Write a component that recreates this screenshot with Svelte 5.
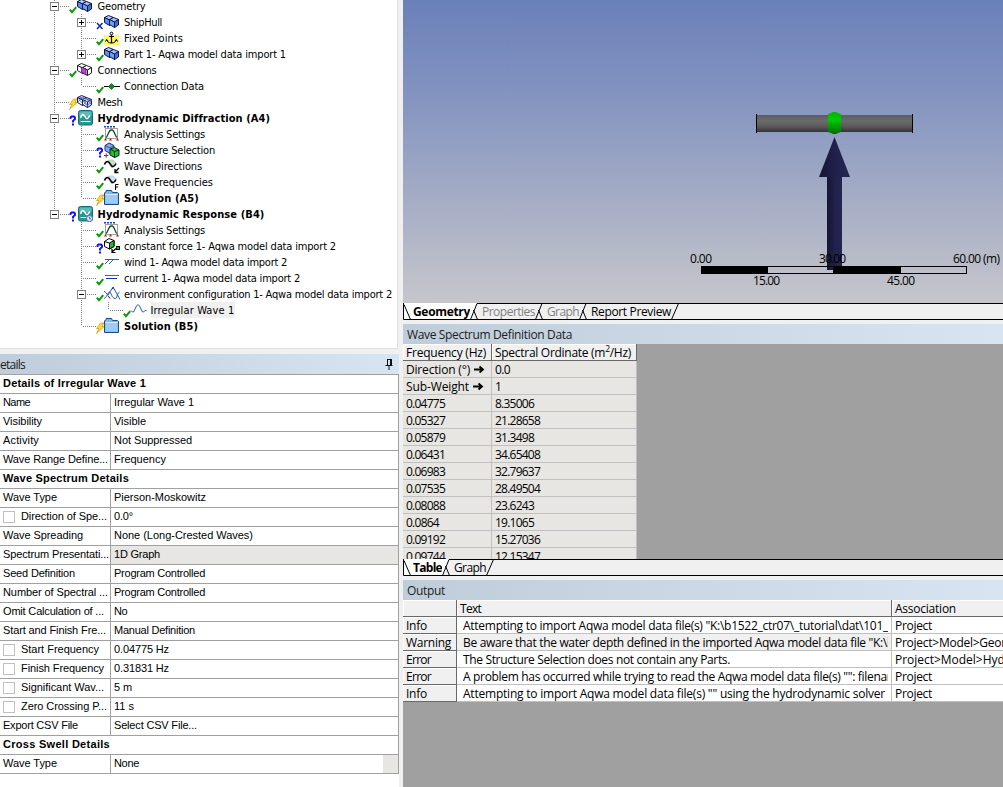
<script>
  // Adjusts tracking so that a label takes the given width in pixels.
  function fit(node, width) {
    if (!width) return;
    const natural = node.getBoundingClientRect().width;
    const n = node.textContent.length;
    node.style.letterSpacing = (width - natural) / n + 'px';
  }

  // d: depth, box: expander, v: guide columns (1 = through, 0.5 = ends here)
  const tree = [
    { d: 0, box: '-', st: 'ok', ic: 'cubes', t: 'Geometry', w: 48, v: [1] },
    { d: 1, box: '+', st: 'x', ic: 'cubes', t: 'ShipHull', w: 38, v: [1, 1] },
    { d: 1, st: 'ok', ic: 'anchor', t: 'Fixed Points', w: 59, v: [1, 1] },
    { d: 1, box: '+', st: 'ok', ic: 'cubes', t: 'Part 1- Aqwa model data import 1', w: 162, v: [1, 0.5] },
    { d: 0, box: '-', st: 'ok', ic: 'conn', t: 'Connections', w: 59, v: [1] },
    { d: 1, st: 'ok', ic: 'conndata', t: 'Connection Data', w: 80, v: [1, 0.5] },
    { d: 0, st: 'bolt', ic: 'mesh', t: 'Mesh', w: 25, v: [1] },
    { d: 0, box: '-', st: 'q', ic: 'hydro', t: 'Hydrodynamic Diffraction (A4)', b: 1, w: 172, v: [1] },
    { d: 1, st: 'ok', ic: 'analysis', t: 'Analysis Settings', w: 81, v: [1, 1] },
    { d: 1, st: 'q', ic: 'struct', t: 'Structure Selection', w: 91, v: [1, 1] },
    { d: 1, st: 'ok', ic: 'wavedir', t: 'Wave Directions', w: 78, v: [1, 1] },
    { d: 1, st: 'ok', ic: 'wavefreq', t: 'Wave Frequencies', w: 89, v: [1, 1] },
    { d: 1, st: 'bolt', ic: 'folder', t: 'Solution (A5)', b: 1, w: 75, v: [1, 0.5] },
    { d: 0, box: '-', st: 'q', ic: 'hydrot', t: 'Hydrodynamic Response (B4)', b: 1, w: 167, v: [0.5] },
    { d: 1, st: 'ok', ic: 'analysis', t: 'Analysis Settings', w: 81, v: [0, 1] },
    { d: 1, st: 'q', ic: 'force', t: 'constant force 1- Aqwa model data import 2', w: 212, v: [0, 1] },
    { d: 1, st: 'ok', ic: 'wind', t: 'wind 1- Aqwa model data import 2', w: 163, v: [0, 1] },
    { d: 1, st: 'ok', ic: 'current', t: 'current 1- Aqwa model data import 2', w: 176, v: [0, 1] },
    { d: 1, box: '-', st: 'ok', ic: 'env', t: 'environment configuration 1- Aqwa model data import 2', w: 268, v: [0, 1] },
    { d: 2, st: 'ok', ic: 'irr', t: 'Irregular Wave 1', w: 84, sel: 1, v: [0, 1, 0.5] },
    { d: 1, st: 'bolt', ic: 'folder', t: 'Solution (B5)', b: 1, w: 74, v: [0, 0.5] }
  ];

  const details = [
    { h: 'Details of Irregular Wave 1', w: 143 },
    { k: 'Name', w: 27, v: 'Irregular Wave 1', vw: 80 },
    { k: 'Visibility', w: 39, v: 'Visible', vw: 32 },
    { k: 'Activity', w: 36, v: 'Not Suppressed', vw: 78 },
    { k: 'Wave Range Define...', w: 105, v: 'Frequency', vw: 52 },
    { h: 'Wave Spectrum Details', w: 126 },
    { k: 'Wave Type', w: 54, v: 'Pierson-Moskowitz', vw: 92 },
    { k: 'Direction of Spe...', w: 86, c: 1, v: '0.0°', vw: 19 },
    { k: 'Wave Spreading', w: 80, v: 'None (Long-Crested Waves)', vw: 139 },
    { k: 'Spectrum Presentati...', w: 106, v: '1D Graph', vw: 46, g: 1 },
    { k: 'Seed Definition', w: 72, v: 'Program Controlled', vw: 91 },
    { k: 'Number of Spectral ...', w: 105, v: 'Program Controlled', vw: 91 },
    { k: 'Omit Calculation of ...', w: 101, v: 'No', vw: 13 },
    { k: 'Start and Finish Fre...', w: 103, v: 'Manual Definition', vw: 81 },
    { k: 'Start Frequency', w: 78, c: 1, v: '0.04775 Hz', vw: 55 },
    { k: 'Finish Frequency', w: 83, c: 1, v: '0.31831 Hz', vw: 55 },
    { k: 'Significant Wav...', w: 83, c: 1, v: '5 m', vw: 18 },
    { k: 'Zero Crossing P...', w: 86, c: 1, v: '11 s', vw: 20 },
    { k: 'Export CSV File', w: 75, v: 'Select CSV File...', vw: 83 },
    { h: 'Cross Swell Details', w: 107 },
    { k: 'Wave Type', w: 54, v: 'None', vw: 25, btn: 1 }
  ];

  const spectrum = [
    ['0.04775', '8.35006'],
    ['0.05327', '21.28658'],
    ['0.05879', '31.3498'],
    ['0.06431', '34.65408'],
    ['0.06983', '32.79637'],
    ['0.07535', '28.49504'],
    ['0.08088', '23.6243'],
    ['0.0864', '19.1065'],
    ['0.09192', '15.27036'],
    ['0.09744', '12.15347']
  ];
  const numWidth = (s) => (s.length - 1) * 6 + 3;

  const messages = [
    { k: 'Info', kw: 21, t: 'Attempting to import Aqwa model data file(s) "K:\\b1522_ctr07\\_tutorial\\dat\\101_', w: 425, a: 'Project', aw: 37 },
    { k: 'Warning', kw: 45, t: 'Be aware that the water depth defined in the imported Aqwa model data file "K:\\b', w: 431, a: 'Project>Model>Geometry', aw: 138, g: 1 },
    { k: 'Error', kw: 25, t: 'The Structure Selection does not contain any Parts.', w: 267, a: 'Project>Model>Hydrodynamic', aw: 169 },
    { k: 'Error', kw: 25, t: 'A problem has occurred while trying to read the Aqwa model data file(s) "": filename', w: 441, a: 'Project', aw: 37 },
    { k: 'Info', kw: 21, t: 'Attempting to import Aqwa model data file(s) "" using the hydrodynamic solver', w: 422, a: 'Project', aw: 37 }
  ];
</script>

{#snippet cube(x, y, top, left, right, line)}
  <g transform="translate({x} {y})" stroke={line} stroke-width="1" stroke-linejoin="round">
    <path d="M.5 2.5 4.5.5l5 2-4 2.5z" fill={top} />
    <path d="M.5 2.5 5.5 5v5.5L.5 7.5z" fill={left} />
    <path d="M5.5 5l4-2.5v5.5l-4 2.5z" fill={right} />
  </g>
{/snippet}

{#snippet status(kind)}
  {#if kind === 'ok'}
    <path d="M.8 11.6 3 14.2 7.2 9.2" fill="none" stroke="#0a9a0a" stroke-width="2" />
  {:else if kind === 'x'}
    <path d="M1 9l5.500 6M6.500 9 1 15" fill="none" stroke="#10309c" stroke-width="1.500" />
  {:else if kind === 'q'}
    <path d="M1.500 9V7.500l1-1h2.500l1 1v1.500L4 10.800V12.500" fill="none" stroke="#1010f0" stroke-width="1.900" />
    <rect x="3" y="13.500" width="2" height="2" fill="#1010f0" />
  {:else if kind === 'bolt'}
    <path d="M4.500 5h3.500L6 8.500h2.200L.5 15.500 3 10.500H.5z" fill="#ffd830" stroke="#c89c20" stroke-width=".7" />
  {/if}
{/snippet}

{#snippet glyph(kind)}
  {#if kind === 'cubes'}
    {@render cube(0, 1, '#a8c8ff', '#5a8ef0', '#4878e0', '#101840')}
    {@render cube(5, 3, '#9cc2ff', '#6c9cf8', '#4070dc', '#101840')}
  {:else if kind === 'anchor'}
    <rect x="0" y="5" width="15" height="10" fill="#fff860" />
    <g fill="none" stroke="#000">
      <circle cx="7.500" cy="3.500" r="1.300" />
      <path d="M7.500 5v8M5 6.500h5" stroke-width="1.200" />
      <path d="M2.500 9.500c.5 2.500 2.500 3.500 5 3.500s4.500-1 5-3.500M1.500 11.500l1-2 1.800 1.500M13.500 11.500l-1-2-1.800 1.500" />
    </g>
  {:else if kind === 'conn'}
    {@render cube(0, 1, '#fff', '#fff', '#fff', '#222')}
    {@render cube(5, 3, '#fff', '#e8e8e8', '#fff', '#222')}
    <path d="M4.500 5l4.500 2v6l-4.500-3z" fill="#c83cf0" stroke="#40104c" stroke-width=".7" />
  {:else if kind === 'conndata'}
    <path d="M0 8.500h16" stroke="#000" />
    <path d="M7.500 5.500l3 3-3 3-3-3z" fill="#0a8a20" stroke="#06400e" stroke-width=".6" />
  {:else if kind === 'mesh'}
    {@render cube(0, 1, '#dfe6ff', '#fff', '#cfd8ff', '#15204c')}
    {@render cube(5, 3, '#dfe6ff', '#fff', '#cfd8ff', '#15204c')}
    <path d="M1 4l4 5M3 2l8 10M1 8l4-4M6 11l4-4M6 7l5 6M9 4l5 6M11 11l4-5M2 3l6 1M8 5l6 1" stroke="#4860d8" stroke-width=".8" />
  {:else if kind === 'hydro' || kind === 'hydrot'}
    <rect x="1.500" y=".5" width="14" height="14.500" rx="2" fill="#2c9590" stroke="#166a78" />
    <rect x="2.500" y="1.500" width="12" height="5" rx="1" fill="#5dbbb6" />
    <path d="M3.500 8c1.300-4.500 3-4.500 4.500-1.500s3 3 4.500-1" fill="none" stroke="#fff" stroke-width="1.500" />
    <path d="M3.500 11.500h10" stroke="#fff" />
    {#if kind === 'hydrot'}
      <circle cx="12.500" cy="12.500" r="3" fill="#d8e4ff" stroke="#5070c0" />
      <path d="M12.500 10.800v2h1.500" fill="none" stroke="#3050a0" stroke-width=".8" />
    {/if}
  {:else if kind === 'analysis'}
    <path d="M0 .7h2M3 .7h2M6 .7h2M9 .7h2" stroke="#1838e0" stroke-width="1.400" />
    <path d="M1.500 2v11M13.500 2v11M1 2.500h13M1 12.500h13" stroke="#a0a0a0" fill="none" />
    <path d="M2 11.500C4 10.500 4.500 4 7 4h1c2.500 0 3 6.500 5 7.500" fill="none" stroke="#185028" stroke-width="1.300" />
    <path d="M0 14.500l1.500-2.500 1.500 2.500zM5 14.500l1.500-2.500L8 14.500zM12 14.500l1.500-2.500 1.500 2.500z" fill="#d01010" />
  {:else if kind === 'struct'}
    <path d="M1 3.500l4-2.500 5 2.500v5.500l-4 2.500-5-3z" fill="#86a8f4" stroke="#203068" />
    <path d="M1 3.500l5 2.500 4-2.500" fill="none" stroke="#203068" stroke-width=".7" />
    <path d="M6 7l4.500-1.500L15 8v5.500l-4.500 2-4.500-2.500z" fill="#20c038" stroke="#062c0c" />
    <path d="M6 7l4.500 2.500L15 8M10.500 9.500v6" fill="none" stroke="#062c0c" />
    <path d="M0 13.500h4.500M2.200 11.300v4.500" stroke="#d01010" />
  {:else if kind === 'wavedir' || kind === 'wavefreq'}
    <path d="M3 4l2-2h4l3 3-1 3-3 2z" fill={kind === 'wavedir' ? '#c4e4c4' : '#c8e4f8'} stroke="#b4b4b4" stroke-width=".6" />
    <path d="M.5 6.500C2 2.500 4.500 2.500 6.300 6S10 9.500 12 5.500" fill="none" stroke="#000" stroke-width="1.600" />
    {#if kind === 'wavedir'}
      <path d="M15 10l-4 4M11 11v3.500h3.500" fill="none" stroke="#000" stroke-width="1.300" />
    {:else}
      <path d="M11.500 16v-5.500h3M11.500 13h2.500" fill="none" stroke="#000" />
    {/if}
  {:else if kind === 'folder'}
    <path d="M.5 14.500V3L2 1.500V.5h5.500l1 2h5l1 1v11z" fill="#80b8ec" stroke="#1c4c84" />
    <path d="M1.500 13.500v-9h12v9z" fill="#9ccbf6" />
    <path d="M1.500 4.500h12" stroke="#d4eaff" />
  {:else if kind === 'force'}
    <path d="M.5 3.500L5 .5l5 2v6l-4.500 2.500-5-2.500z" fill="#fff" stroke="#000" />
    <path d="M5.500 5l4.500-2.500v6L5.500 11z" fill="#18c030" stroke="#000" />
    <path d="M.5 3.500l5 1.500" stroke="#000" />
    <path d="M12 10.500l-4 3.500M8 11v3.500h3.500" fill="none" stroke="#000" stroke-width="1.200" />
    <rect x="12.500" y="8.500" width="3" height="3" fill="#18c030" stroke="#000" />
  {:else if kind === 'wind'}
    <path d="M1 5.500h14M1 10l4-4M5 10l4-4" stroke="#1c64b4" fill="none" />
  {:else if kind === 'current'}
    <path d="M1 5.500h14" stroke="#1c74c4" />
    <path d="M2 8.500h11" stroke="#1030b0" />
  {:else if kind === 'env'}
    <path d="M0 12.500C2.500 12 4 6 5.500 6S8 12.500 11 12.500 12 8 15.500 6" fill="none" stroke="#2850c8" />
    <path d="M0 5l4 4L9 1l4 7 3 5.500" fill="none" stroke="#2850c8" />
    <path d="M4 9.500l2 3M8 3l2-1.500" stroke="#101c60" />
  {:else if kind === 'irr'}
    <path d="M0 8.500l1.500 1.500h1L5.500 4l1.500-1.500L8.500 4l3 6h1l1.500-1.500h1.500" fill="none" stroke="#2850d0" />
  {/if}
{/snippet}

{#snippet tabs(items)}
  <div class="tabs">
    <svg width="8" height="17"><path d="M0 0h8v17H0z" fill="#fff" /><path d="M.5 0v16.500H8M1 1.500L7.500 16.500" stroke="#000" fill="none" /></svg>
    {#each items as it, i}
      <div class="tab" class:active={i === 0} class:off={it.off}><span use:fit={it.w}>{it.t}</span></div>
      {#if i < items.length - 1}
        <svg width={it.gap} height="17">
          {#if i === 0}<path d="M0 0h7L1 17H0z" fill="#fff" />{/if}
          <path d="M0 16.500h12{i === 0 ? 'M7 .5h5' : 'M0 .5h12'}M.500 16.500L7 .5M3.500 7L7.500 16.500" stroke="#000" fill="none" />
        </svg>
      {:else}
        <svg width="8" height="17"><path d="M0 16.500h8M0 .5h8M.5 16.500L7.500 .5" stroke="#000" fill="none" /></svg>
      {/if}
    {/each}
    <div class="tabfill"></div>
  </div>
{/snippet}

{#snippet arrow()}
  <svg class="arrow" width="11" height="9"><path d="M0 4.500h9M5.500 1.500l3.500 3-3.500 3" stroke="#000" stroke-width="1.800" fill="none" /></svg>
{/snippet}

<div class="app">
  <div class="left">
    <div class="tree">
      {#each tree as n}
        {@const bx = 54 + n.d * 27}
        <div class="node">
          <svg width={97.5 + n.d * 26.5} height="16">
            {#each n.v as g, i}
              {#if g}
                <path d="M{54.5 + i * 27} 0V{g === 1 ? 16 : 8}" class="guide" />
              {/if}
            {/each}
            <path d="M{bx + 2} 8.500H{bx + 16}" class="guide" />
            {#if n.box}
              <rect x={bx - 3.5} y="4.500" width="8" height="8" fill="#fff" stroke="#808080" />
              <path d="M{bx - 2} 8.500h5{n.box === '+' ? `M${bx + 0.5} 6v5` : ''}" stroke="#000" />
            {/if}
            <g transform="translate({bx + 15} 0)">{@render status(n.st)}</g>
            <g transform="translate({bx + 23} 0)">{@render glyph(n.ic)}</g>
          </svg>
          <span class="label" class:bold={n.b} class:sel={n.sel} use:fit={n.w}>{n.t}</span>
        </div>
      {/each}
    </div>

    <div class="caption dcap">
      <span use:fit={25}>etails</span>
      <svg width="8" height="12"><path d="M2 1.500h5M2.500 1v6M5.500 1v6M6.500 1v6M.5 7.500h7M4 8v4" stroke="#111" fill="none" /></svg>
    </div>
    <div class="details">
      {#each details as r}
        {#if r.h}
          <div class="drow head"><span use:fit={r.w}>{r.h}</span></div>
        {:else}
          <div class="drow">
            <div class="key">
              {#if r.c}<i class="check"></i>{/if}<span use:fit={r.w}>{r.k}</span>
            </div>
            <div class="val" class:gray={r.g}>
              <span use:fit={r.vw}>{r.v}</span>
              {#if r.btn}<i class="more"></i>{/if}
            </div>
          </div>
        {/if}
      {/each}
    </div>
  </div>

  <div class="right">
    <svg class="view" width="600" height="303" viewBox="403 0 600 303">
      <defs>
        <linearGradient id="tube" x1="0" y1="0" x2="0" y2="1">
          <stop offset="0" stop-color="#5c5c5c" /><stop offset=".35" stop-color="#6c6c6c" />
          <stop offset=".7" stop-color="#585858" /><stop offset="1" stop-color="#333" />
        </linearGradient>
        <linearGradient id="green" x1="0" y1="0" x2="0" y2="1">
          <stop offset="0" stop-color="#00b400" /><stop offset=".35" stop-color="#00cc00" />
          <stop offset=".65" stop-color="#00a000" /><stop offset="1" stop-color="#006a00" />
        </linearGradient>
        <linearGradient id="shaft" x1="0" y1="0" x2="1" y2="0">
          <stop offset="0" stop-color="#151532" /><stop offset=".6" stop-color="#222250" /><stop offset="1" stop-color="#24244f" />
        </linearGradient>
      </defs>
      <rect x="756" y="115" width="157" height="17" fill="url(#tube)" />
      <path d="M756.500 114v19M912.500 114v19" stroke="#000" />
      <path d="M828 114l3-1 2-1h3l2 1 3 1v8.500l-1 1.500 1 1.500V132l-3 1-2 1h-3l-2-1-3-1v-7l1-1.500-1-1.500z" fill="url(#green)" />
      <path d="M834.500 137L850 177H819z" fill="url(#shaft)" />
      <rect x="827" y="177" width="15" height="93" fill="url(#shaft)" />
      <rect x="701.500" y="266.500" width="265" height="7" fill="none" stroke="#000" />
      <path d="M701 266h67v8h-67zM833 266h68v8h-68z" />
      <g class="scale">
        <text x="690" y="263" textLength="22">0.00</text>
        <text x="819" y="263" textLength="27">30.00</text>
        <text x="953" y="263" textLength="28">60.00</text>
        <text x="983" y="263" textLength="17">(m)</text>
        <text x="753" y="285" textLength="27">15.00</text>
        <text x="887" y="285" textLength="28">45.00</text>
      </g>
    </svg>
    {@render tabs([
      { t: 'Geometry', w: 57, gap: 12 },
      { t: 'Properties', w: 53, off: 1, gap: 12 },
      { t: 'Graph', w: 32, off: 1, gap: 12 },
      { t: 'Report Preview', w: 80 }
    ])}
    <div class="caption rcap"><span use:fit={165}>Wave Spectrum Definition Data</span></div>
    <div class="gridarea">
      <div class="srow shead">
        <div><span use:fit={80}>Frequency (Hz)</span></div>
        <div><span use:fit={136}>Spectral Ordinate (m<sup>2</sup>/Hz)</span></div>
      </div>
      <div class="srow">
        <div><span use:fit={64}>Direction (°)</span>{@render arrow()}</div>
        <div><span use:fit={15}>0.0</span></div>
      </div>
      <div class="srow">
        <div><span use:fit={63}>Sub-Weight</span>{@render arrow()}</div>
        <div><span>1</span></div>
      </div>
      {#each spectrum as [f, s]}
        <div class="srow">
          <div><span use:fit={numWidth(f)}>{f}</span></div>
          <div><span use:fit={numWidth(s)}>{s}</span></div>
        </div>
      {/each}
    </div>
    {@render tabs([{ t: 'Table', w: 29, gap: 12 }, { t: 'Graph', w: 32 }])}
    <div class="caption ocap"><span use:fit={38}>Output</span></div>
    <div class="output">
      <div class="orow ohead">
        <div></div>
        <div><span use:fit={21}>Text</span></div>
        <div><span use:fit={61}>Association</span></div>
      </div>
      {#each messages as m}
        <div class="orow" class:shade={m.g}>
          <div><span use:fit={m.kw}>{m.k}</span></div>
          <div><p><span use:fit={m.w}>{m.t}</span></p></div>
          <div><span use:fit={m.aw}>{m.a}</span></div>
        </div>
      {/each}
    </div>
  </div>
</div>

<style>
  :global(body) { margin: 0; overflow: hidden; }
  .app {
    display: flex; gap: 4px; width: 1003px; height: 787px; overflow: hidden;
    background: #f0f0f0; color: #000;
    font: 12px/17px "Open Sans", "Noto Sans", sans-serif;
  }
  span { white-space: pre; display: inline-block; }
  svg { flex: none; display: block; }
  .left { width: 399px; display: flex; flex-direction: column; flex: none; }
  .tree {
    box-sizing: border-box; width: 398px; height: 349px; overflow: hidden; flex: none;
    background: #fff; border-right: 1px solid #dfdfdf; border-bottom: 1px solid #dfdfdf;
    margin-bottom: 5px;
  }
  .node { display: flex; height: 16px; }
  .node:first-child { margin-top: -2px; }
  .node svg { overflow: visible; }
  .guide { stroke: #808080; stroke-dasharray: 1 1; fill: none; }
  .label {
    box-sizing: border-box; height: 16px; padding-top: 1px;
    font: 11px/16px "DejaVu Sans Condensed", "DejaVu Sans", sans-serif; font-stretch: condensed;
  }
  .label.bold { font-weight: bold; }
  .label.sel { background: #f0f0f0; }
  .caption {
    box-sizing: border-box; height: 20px; line-height: 20px; flex: none; color: #1c1c1c;
    background: linear-gradient(90deg, #bfcddb, #d7e4f2);
  }
  .caption span { line-height: 22px; height: 20px; }
  .dcap { display: flex; justify-content: space-between; align-items: center; padding-right: 6px; width: 399px; }
  .details {
    flex: 1; background: #fff; border-top: 1px solid #a0a0a0;
    font: 11px/16px "Liberation Sans", Arial, sans-serif;
  }
  .drow {
    box-sizing: border-box; display: flex; height: 19px;
    border-right: 1px solid #a0a0a0; border-bottom: 1px solid #a0a0a0;
  }
  .head { font-weight: bold; padding-left: 3px; }
  .key {
    box-sizing: border-box; width: 111px; flex: none; padding-left: 3px; display: flex;
    border-right: 1px solid #a0a0a0; overflow: hidden;
  }
  .check { box-sizing: border-box; width: 12px; height: 12px; margin: 3px 6px 0 0; border: 1px solid #c0c0c0; flex: none; }
  .val { flex: 1; display: flex; justify-content: space-between; padding-left: 3px; }
  .gray, .more { background: #e7e6e2; }
  .more { width: 15px; }
  .right { width: 600px; flex: none; display: flex; flex-direction: column; }
  .view { background: linear-gradient(#6a80b9, #8494c0 32%, #c6c6cb); }
  .scale { font: 12px "Open Sans", "Noto Sans", sans-serif; }
  .tabs { display: flex; height: 17px; flex: none; margin-bottom: 4px; }
  .tab { box-sizing: border-box; height: 17px; line-height: 17px; border-top: 1px solid #000; border-bottom: 1px solid #000; }
  .tab span { line-height: 16px; height: 15px; display: block; width: max-content; }
  .tab.active { background: #fff; border-top-color: #fff; font-weight: bold; padding-left: 2px; }
  .tab.off { color: #808080; }
  .tabfill { flex: 1; border-top: 1px solid #000; border-bottom: 1px solid #000; }
  .rcap, .ocap { padding-left: 4px; }
  .gridarea { height: 215px; overflow: hidden; background: #a0a0a0; flex: none; }
  .srow { display: flex; width: 234px; height: 17px; }
  .srow > div {
    box-sizing: border-box; width: 145px; height: 17px; padding-left: 3px; display: flex;
    border-right: 1px solid #c0c0c0; border-bottom: 1px solid #c0c0c0; background: #e7e6e2;
  }
  .srow > div:first-child { width: 89px; }
  .shead > div { background: #f0f0f0; border-color: #696969; box-shadow: inset 1px 1px #fff; }
  sup { font-size: 8.5px; line-height: 0; vertical-align: 5px; }
  .arrow { margin: 4px 0 0 4px; }
  .output { flex: 1; background: #a0a0a0; }
  .orow { display: flex; height: 17px; background: #fff; }
  .orow > div { box-sizing: border-box; height: 17px; border-bottom: 1px solid #c0c0c0; border-right: 1px solid #c0c0c0; padding-left: 3px; overflow: hidden; }
  .orow > div:nth-child(1) { width: 54px; background: #f0f0f0; border-color: #696969; box-shadow: inset 1px 1px #fff; }
  .orow > div:nth-child(2) { width: 435px; padding: 0 3px 0 6px; }
  .orow > div:nth-child(3) { width: 111px; border-right: 0; }
  p { margin: 0; overflow: hidden; height: 17px; }
  .shade > div:nth-child(2) { background: #f0f0f0; }
  .ohead > div:nth-child(n) { background: #f0f0f0; border-color: #696969; box-shadow: inset 1px 1px #fff; padding-left: 3px; }
</style>
